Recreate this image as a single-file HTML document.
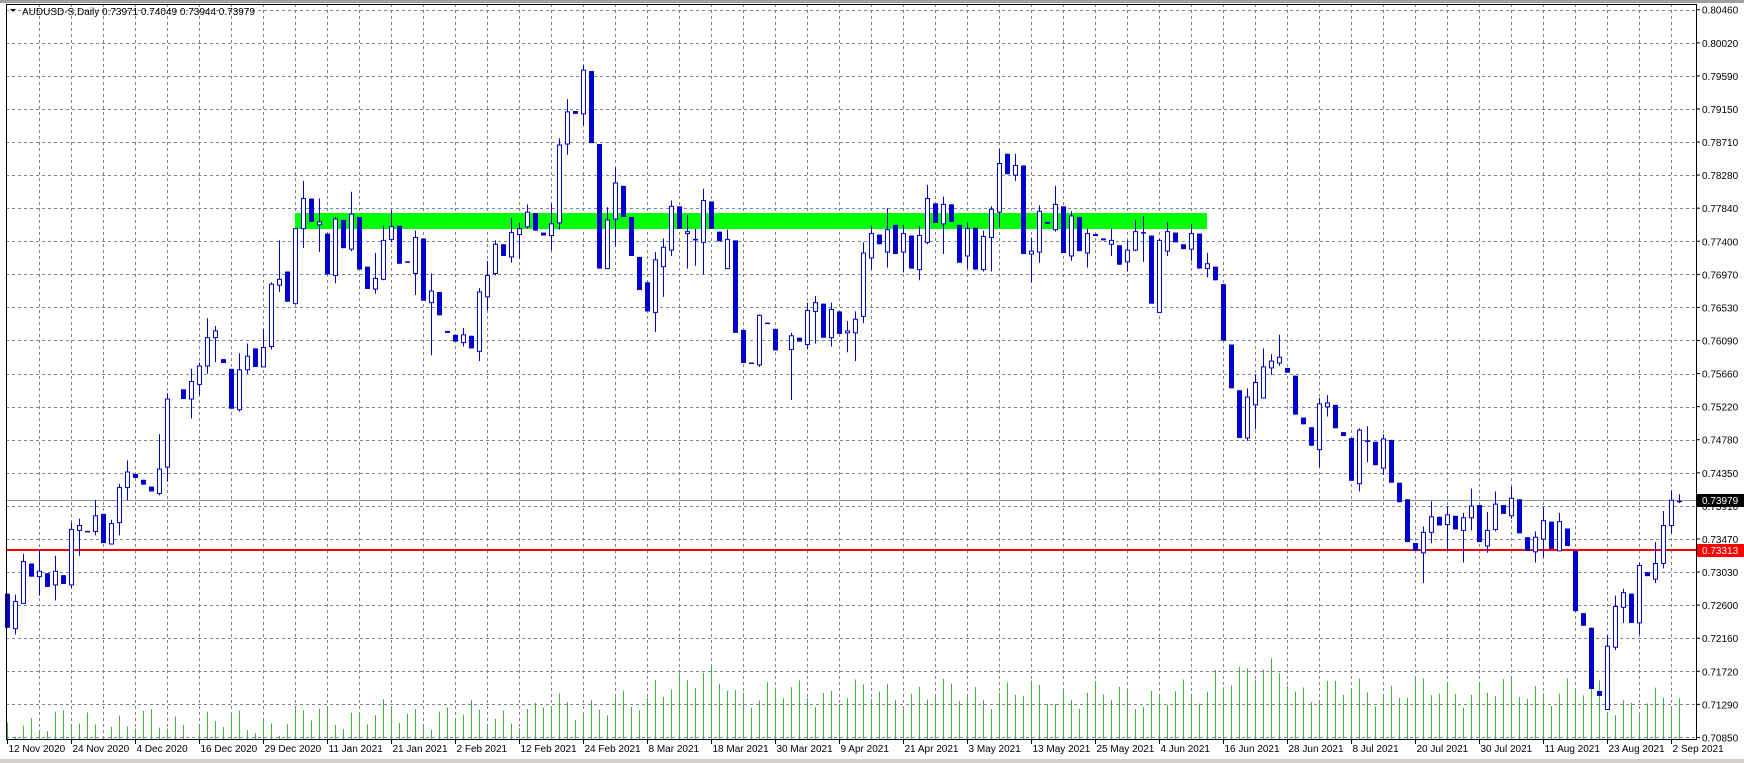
<!DOCTYPE html>
<html><head><meta charset="utf-8">
<style>
html,body{margin:0;padding:0;background:#fff;width:1744px;height:763px;overflow:hidden}
svg{display:block}
text{font-family:"Liberation Sans",sans-serif;font-size:10px}
</style></head>
<body>
<svg id="c" width="1744" height="763" xmlns="http://www.w3.org/2000/svg"></svg>
<script>
var S=2.055;
var D=[
['d',1220,1290],['u',1236,1292,1222,1304],['u',1154,1240,1138,1240],['d',1158,1185],['u',1174,1185,1130,1224],
['d',1178,1206],['u',1174,1202,1142,1234],['d',1182,1200],['u',1088,1202,1074,1208],['u',1080,1090,1066,1142],
['d',1091,1093],['u',1060,1092,1028,1100],['d',1056,1116],['u',1076,1118,1068,1118],['u',1002,1074,994,1100],
['u',970,1002,946,1028],['d',974,982],['d',986,996],['d',1000,1010],['u',964,1014,892,1018],
['u',820,960,808,990],null,['d',800,820],['u',784,820,758,860],['u',752,790,745,812],
['u',694,752,654,768],['u',680,694,670,744],['d',738,746],['d',758,840],['u',760,842,726,846],
['u',732,760,706,768],['d',716,754],['u',714,754,676,754],['u',584,712,580,718],['u',574,586,494,600],
['d',558,620],['u',470,624],['u',408,470,372,510],['d',408,456],['u',456,462,408,518],
['d',480,564],['u',450,566,446,582],['d',452,510],['u',440,512,394,516],['d',446,554],
['d',548,594],['u',572,594,520,604],['u',494,574,464,576],['u',466,492,432,498],['d',464,542],
['d',537,539],['u',488,562,474,606],['d',490,618],['u',598,622,562,730],['d',600,648],
['d',680,684],['d',688,702],['u',688,704,674,712],['d',690,716],['u',600,722,592,742],
['u',566,610,536,638],['u',502,562,494,566],['d',502,526],['u',478,528,448,540],['u',470,482,458,532],
['u',436,466,420,470],['d',438,474],['d',478,484],['u',460,484,418,514],['u',298,458,284,472],
['u',230,296,204,318],['d',228,234],['u',144,234,134,258],['d',146,294],['d',296,552],
['u',452,552,426,552],['u',376,450,344,506],['d',382,446],['d',446,526],['d',528,596],
['d',580,640],['u',534,642,518,682],['u',508,548,490,610],['u',424,514,412,526],['d',424,470],
['u',476,480,442,552],['d',491,493,470,546],['u',412,498,388,564],['d',414,470],['d',476,496],
['u',492,552,472,552],['d',494,684],['d',678,746],['d',745,747],['u',648,750,646,754],
['d',663,665],['d',676,720],null,['u',690,718,684,822],['d',694,702],
['u',638,708,622,718],['u',622,640,608,706],['d',624,694],['u',636,694,622,712],['d',640,686],
['u',680,684,660,724],['u',656,684,640,742],['u',520,650,498,664],['u',480,530,464,554],['d',482,502],
['u',472,518,428,550],['d',462,522],['u',480,518,462,560],['d',484,552],['u',484,554,464,576],
['u',408,498,380,502],['d',418,458],['u',420,460,404,522],['d',420,456],['d',462,540],
['u',470,526,456,552],['d',468,554],['u',486,554,474,558],['u',430,488,424,558],['u',336,436,306,468],
['d',316,358],['u',340,360,316,372],['d',340,522],['u',516,522,488,580],['u',434,518,422,540],
['d',456,460],['u',420,472,382,476],['d',424,520],['u',444,526,434,536],['d',446,516],
['u',480,520,470,550],['d',481,485],['d',490,494],['u',494,502,470,526],['d',504,544],
['u',514,538,494,558],['u',476,514,452,516],['d',477,479,444,538],['d',484,624],['u',494,642,490,642],
['u',476,516,456,526],['d',478,498],['d',502,512],['u',480,512,460,536],['d',480,552],
['u',542,552,520,570],['d',548,576],['d',584,700],['d',708,798],['d',802,900],
['u',816,900,798,906],['u',786,832,770,882],['u',754,818,716,818],['u',742,756,728,770],['u',734,746,688,752],
['d',756,766],['d',772,852],['d',858,872],['d',878,916],['u',830,924,818,960],
['u',828,836,812,856],['d',832,880],['d',888,896],['d',900,988],['u',884,994,880,1010],
['d',905,907,876,950],['d',908,956],['u',902,962,892,976],['d',904,992],['d',992,1032],
['d',1026,1114],['d',1116,1132],['u',1094,1136,1082,1198],['u',1062,1094,1030,1116],['d',1062,1080],
['u',1058,1078,1040,1132],['d',1060,1088],['u',1064,1090,1054,1156],['u',1040,1064,1004,1090],['d',1038,1114],
['u',1090,1122,1052,1136],['u',1036,1088,1010,1092],['d',1038,1056],['u',1024,1060,1000,1066],['d',1026,1096],
['d',1104,1132],['u',1104,1134,1092,1156],['u',1070,1108,1042,1146],['d',1072,1128],['u',1072,1132,1054,1132],
['d',1086,1122],['d',1132,1256],['d',1260,1286],['d',1290,1416],['d',1420,1430],
['u',1328,1458,1306,1458],['u',1246,1330,1224,1336],['u',1218,1248,1210,1280],['d',1220,1280],['u',1162,1280,1156,1304],
['d',1176,1184],['u',1158,1190,1114,1198],['u',1080,1158,1050,1168],['u',1028,1080,1008,1096],['d',1029,1031,1016,1034]
];
var s='';
function R(x,y,w,h,f){s+='<rect x="'+x+'" y="'+y+'" width="'+w+'" height="'+h+'" fill="'+f+'"/>';}
function L(x1,y1,x2,y2,c,w,d){s+='<line x1="'+x1+'" y1="'+y1+'" x2="'+x2+'" y2="'+y2+'" stroke="'+c+'" stroke-width="'+(w||1)+'"'+(d?' stroke-dasharray="'+d+'"':'')+'/>';}
function T(x,y,t,c,a){s+='<text x="'+x+'" y="'+y+'" fill="'+(c||'#000')+'"'+(a?' text-anchor="'+a+'"':'')+'>'+t+'</text>';}
R(0,0,1744,3,'#a0a0a0');
R(0,759,1744,4,'#d4d0c8');
for(var k=0;k<23;k++){var y=Math.round(9.7+33.08*k)+0.5;L(6,y,1696,y,'#7a8494',1,'3,3');}
for(var k=1;k<=52;k++){var x=Math.round(7.3+32*k)+0.5;L(x,4,x,739,'#7a8494',1,'3,3');}
function vt(i){var b;
 if(i<37)b=1485;else if(i<67)b=1470;else if(i<81)b=1450;else if(i<91)b=1400;else if(i<131)b=1425;else if(i<151)b=1430;else if(i<161)b=1385;else if(i<200)b=1420;else b=1445;
 return b+22*Math.sin(i*1.7)+12*Math.sin(i*0.63);}
for(var i=0;i<210;i++){var x=Math.round(7.3+8*i)+0.5;L(x,vt(i)/S,x,739,'#3cb43c',1);}
R(295,213,912,16,'#00ff00');
L(6,500.5,1696,500.5,'#8a96a6',1);
L(6,550,1696,550,'#ff0000',2);
var B='#0000cd';
for(var i=0;i<D.length;i++){var c=D[i];if(!c)continue;
 var x=Math.round(7.3+8*i);
 var bt=c[1]/S,bb=c[2]/S,wt=(c[3]!=null?c[3]:c[1])/S,wb=(c[4]!=null?c[4]:c[2])/S;
 L(x+0.5,wt,x+0.5,wb,B,1);
 var h=Math.max(bb-bt,1.5);
 if(c[0]=='d'){R(x-2,bt,5,h,B);}
 else{s+='<rect x="'+(x-1.5)+'" y="'+bt+'" width="4" height="'+h+'" fill="#fff" stroke="'+B+'" stroke-width="1"/>';}
}
L(6.5,4,6.5,739,'#000',1);L(6,4.5,1696,4.5,'#000',1);L(1696.5,4,1696.5,739.5,'#000',1);L(6,739.5,1697,739.5,'#000',1);
var P=['0.80460','0.80020','0.79590','0.79150','0.78710','0.78280','0.77840','0.77400','0.76970','0.76530','0.76090','0.75660','0.75220','0.74780','0.74350','0.73910','0.73470','0.73030','0.72600','0.72160','0.71720','0.71290','0.70850'];
for(var k=0;k<23;k++){var y=9.7+33.08*k;L(1696,y,1700,y,'#000',1);T(1702,y+4,P[k]);}
R(1697,494,47,13,'#000');T(1702,504,'0.73979','#fff');
R(1697,544,47,13,'#ff0000');T(1702,554,'0.73313','#fff');
var DT=['12 Nov 2020','24 Nov 2020','4 Dec 2020','16 Dec 2020','29 Dec 2020','11 Jan 2021','21 Jan 2021','2 Feb 2021','12 Feb 2021','24 Feb 2021','8 Mar 2021','18 Mar 2021','30 Mar 2021','9 Apr 2021','21 Apr 2021','3 May 2021','13 May 2021','25 May 2021','4 Jun 2021','16 Jun 2021','28 Jun 2021','8 Jul 2021','20 Jul 2021','30 Jul 2021','11 Aug 2021','23 Aug 2021','2 Sep 2021'];
for(var k=0;k<DT.length;k++){var x=Math.round(7.3+64*k)+0.5;L(x,739,x,744,'#000',1);T(x+1,752,DT[k]);}
s+='<polygon points="10,9 16,9 13,12" fill="#000"/>';
T(22,15,'AUDUSD-S,Daily  0.73971 0.74049 0.73944 0.73979','#000');
document.getElementById('c').innerHTML=s;
</script>
</body></html>
